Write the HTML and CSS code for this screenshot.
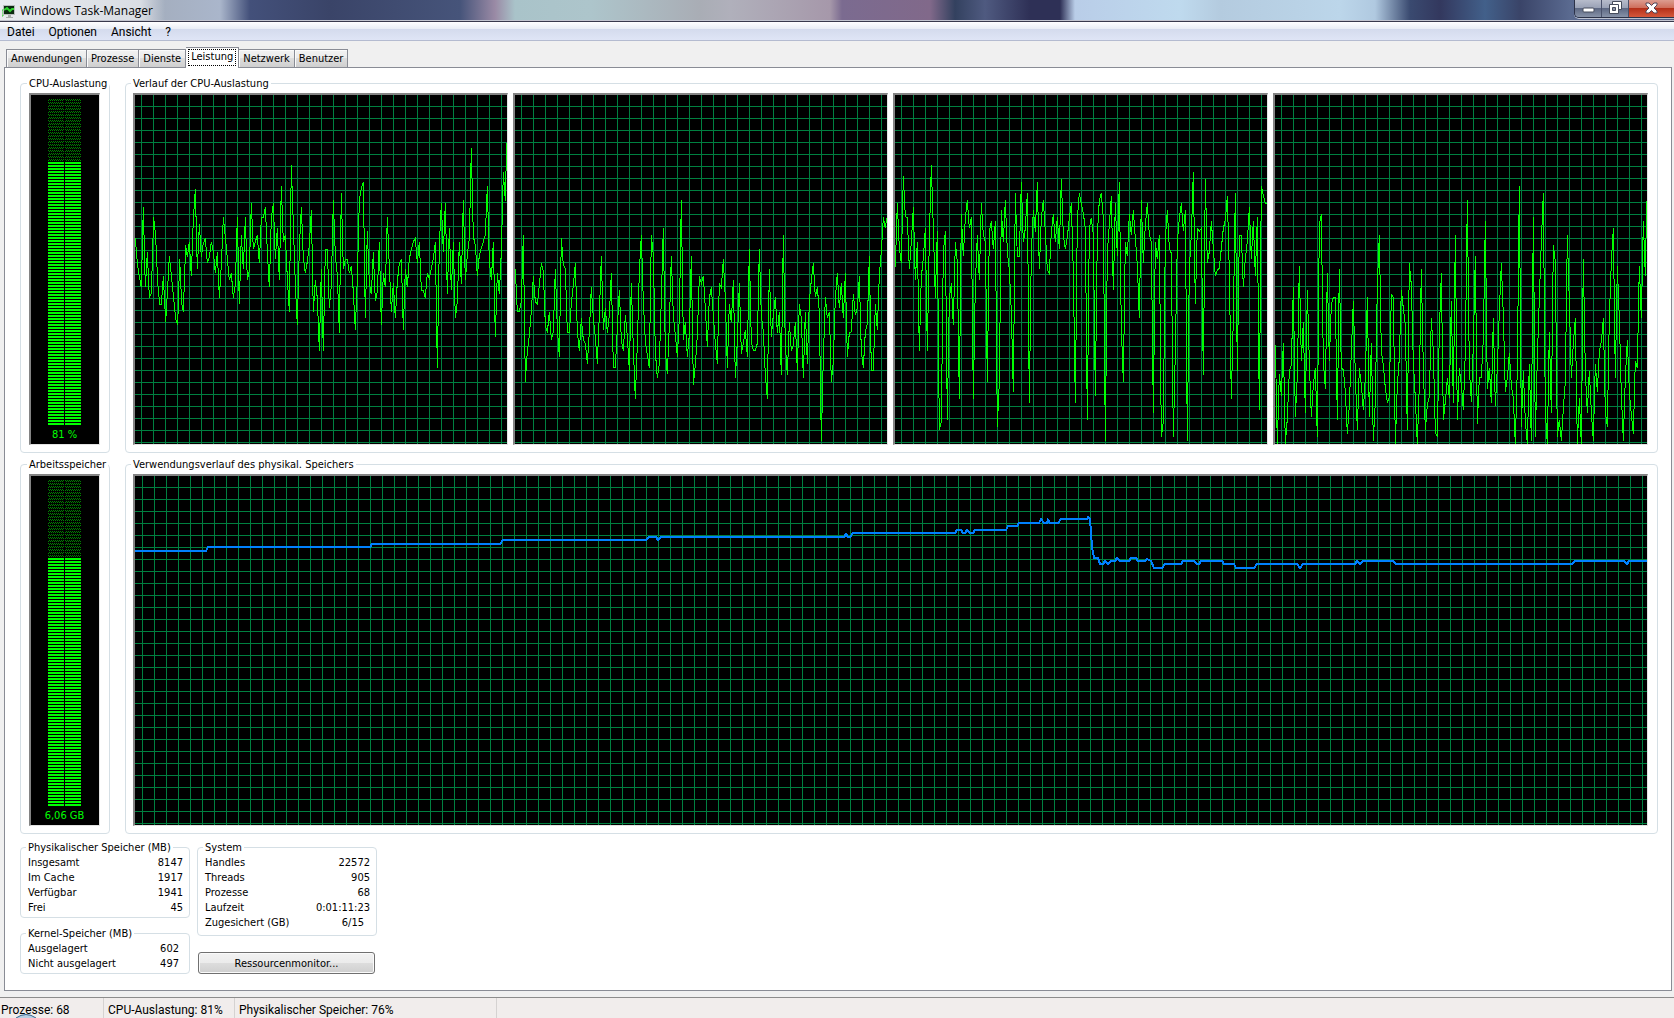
FILE: index.html
```html
<!DOCTYPE html>
<html lang="de">
<head>
  <meta charset="UTF-8">
  <meta name="viewport" content="width=device-width, initial-scale=1.0">
  <title>Windows Task-Manager</title>
  <link rel="stylesheet" href="styles.css">
</head>
<body>

  <header class="titlebar">
    <svg class="app-icon" width="13" height="16" viewBox="0 0 13 16">
      <path d="M0 7h1v6H0" fill="none" stroke="#3c3" />
      <path d="M1 2h12v10H1z" fill="#b9bdbd" />
      <path d="M2 3h10v8H2z" fill="#0b2a10" />
      <path d="M2 7l3-2 3 3 2-2h2" fill="none" stroke="#2fd02f" stroke-width="2" />
      <path d="M6 12h3v2h2v1H4v-1h2z" fill="#a9adad" />
    </svg>
    <h1>Windows Task-Manager</h1>
    <div class="window-buttons">
      <button class="win-btn" aria-label="Minimieren">
        <svg width="13" height="7" viewBox="0 0 13 7"><rect x="1" y="1" width="11" height="4" rx="1" fill="#fff" stroke="#464c5c" /></svg>
      </button>
      <button class="win-btn" aria-label="Verkleinern">
        <svg width="13" height="13" viewBox="0 0 13 13">
          <path d="M3.500.5h9v8h-9z" fill="#fff" stroke="#464c5c" />
          <path d="M.5 3.500h9v9h-9z" fill="#fff" stroke="#464c5c" />
          <path d="M3.500 6.500h3v3h-3z" fill="#8a93a6" stroke="#464c5c" />
        </svg>
      </button>
      <button class="win-btn close" aria-label="Schließen">
        <svg width="13" height="12" viewBox="0 0 13 12">
          <path d="M1 1h3l2.500 2.500L9 1h3v2L9 6l3 3v2H9L6.500 8.500 4 11H1V9l3-3-3-3z" fill="#fff" stroke="#50465a" />
        </svg>
      </button>
    </div>
  </header>

  <nav class="menu">
    <button>Datei</button>
    <button>Optionen</button>
    <button>Ansicht</button>
    <button>?</button>
  </nav>

  <div class="tabs" role="tablist">
    <button role="tab">Anwendungen</button>
    <button role="tab">Prozesse</button>
    <button role="tab">Dienste</button>
    <button role="tab" class="active" aria-selected="true"><span>Leistung</span></button>
    <button role="tab">Netzwerk</button>
    <button role="tab">Benutzer</button>
  </div>

  <main class="panel">
    <div class="row">
      <fieldset class="group meter-group">
        <legend>CPU-Auslastung</legend>
        <div class="meter">
          <div class="meter-bar"><div class="meter-fill" style="height: 81%"></div></div>
          <span>81 %</span>
        </div>
      </fieldset>

      <fieldset class="group history-group">
        <legend>Verlauf der CPU-Auslastung</legend>
        <div class="charts">
          <div class="chart">
            <svg viewBox="15 30 1116 1047" preserveAspectRatio="none">
              <polyline points="16,460 22,535 28,575 34,607 40,366 46,607 52,502 58,638 64,625 71,397 77,455 83,590 89,658 94,658 100,574 107,710 112,625 118,514 125,580 131,640 137,702 143,721 149,522 155,655 160,680 167,481 172,515 178,471 184,574 190,400 196,313 202,553 208,418 214,515 220,475 226,460 232,535 238,515 244,471 250,500 256,565 262,502 268,638 274,540 280,397 286,455 292,520 298,586 304,565 310,638 316,600 322,397 328,658 334,451 340,553 346,397 352,586 358,555 364,355 370,493 376,470 382,451 388,535 394,397 400,397 406,366 412,500 418,607 424,400 430,355 436,523 442,430 448,586 454,304 460,471 466,451 472,580 478,680 484,241 490,420 496,600 502,721 508,490 514,366 520,520 526,565 532,530 538,480 544,376 550,680 556,586 562,640 568,797 574,553 580,797 586,493 592,493 598,670 604,600 610,346 616,510 622,570 628,743 634,325 640,553 646,523 652,523 658,565 664,544 670,620 676,734 682,580 688,345 694,310 700,292 706,700 712,439 718,595 724,628 730,502 736,649 742,620 748,471 754,721 760,565 766,607 772,397 778,545 784,680 790,595 796,700 802,590 808,535 814,523 820,734 826,553 832,607 838,520 844,495 850,470 856,460 862,535 868,471 874,615 880,616 886,638 892,565 898,580 904,550 910,520 916,472 922,848 928,480 934,355 940,502 946,355 952,628 958,430 964,616 970,472 976,700 982,650 988,472 994,596 1000,346 1006,586 1012,510 1018,460 1024,190 1030,455 1036,480 1042,574 1048,510 1054,490 1060,470 1066,450 1072,304 1078,530 1084,586 1090,472 1096,755 1102,565 1108,628 1114,500 1120,262 1126,347 1130,173" />
            </svg>
          </div>
          <div class="chart">
            <svg viewBox="15 30 1116 1047" preserveAspectRatio="none">
              <polyline points="16,553 22,680 28,680 34,650 40,451 46,890 52,800 58,750 64,680 70,574 76,650 82,658 88,600 94,535 100,560 106,720 112,743 118,680 124,764 130,740 136,553 142,730 148,815 154,460 160,540 166,550 172,743 178,743 184,655 190,600 196,535 202,740 208,797 214,700 220,765 226,775 232,836 238,740 244,607 250,700 256,755 262,836 268,690 274,514 280,734 286,670 292,743 298,690 304,565 310,848 316,848 322,730 328,616 334,765 340,797 346,690 352,755 358,857 364,595 370,790 376,941 382,780 388,560 394,451 400,650 406,770 412,810 418,848 424,451 430,510 436,800 442,878 448,835 454,640 460,430 466,800 472,868 478,720 484,514 490,690 496,750 502,815 508,700 514,346 520,764 526,712 532,815 538,750 544,514 550,899 556,840 562,750 568,574 574,595 580,574 586,670 592,785 598,640 604,607 610,690 616,775 622,836 628,595 634,607 640,523 646,640 652,848 658,658 664,712 670,586 676,878 682,770 688,595 694,806 700,775 706,734 712,815 718,493 724,770 730,797 736,797 742,775 748,493 754,690 760,740 766,870 772,941 778,553 784,755 790,690 796,637 802,743 808,680 814,869 820,451 826,780 832,869 838,712 844,797 850,780 856,712 862,857 868,658 874,700 880,878 886,680 892,836 898,650 904,585 910,535 916,637 922,607 928,680 934,1067 940,820 946,637 952,700 958,680 964,890 970,830 976,640 982,565 988,670 994,595 1000,700 1006,565 1012,815 1018,743 1024,740 1030,628 1036,690 1042,670 1048,574 1054,800 1060,848 1066,740 1072,715 1078,514 1084,857 1090,857 1096,658 1102,734 1108,570 1114,500 1120,397 1126,430 1130,400" />
            </svg>
          </div>
          <div class="chart">
            <svg viewBox="15 30 1116 1047" preserveAspectRatio="none">
              <polyline points="16,545 22,355 28,490 34,535 40,274 46,395 52,398 58,553 64,470 70,366 76,586 82,472 88,797 94,575 100,520 106,430 112,797 118,460 124,241 130,430 136,638 142,439 148,1036 154,1010 160,500 166,439 172,1004 178,640 184,595 190,721 196,472 202,530 208,941 214,388 220,514 226,400 232,346 238,430 244,397 250,941 256,600 262,451 268,586 274,355 280,450 286,470 292,890 298,440 304,409 310,493 316,409 322,1025 328,890 334,376 340,472 346,346 352,500 358,555 364,680 370,920 376,325 382,514 388,514 394,292 400,472 406,430 412,325 418,953 424,500 430,376 436,440 442,292 448,553 454,400 460,346 466,440 472,555 478,565 484,440 490,388 496,472 502,397 508,493 514,283 520,450 526,493 532,455 538,400 544,355 550,560 556,953 562,400 568,325 574,355 580,385 586,430 592,1004 598,430 604,398 610,450 616,932 622,450 628,345 634,325 640,400 646,1067 652,500 658,420 664,334 670,616 676,355 682,514 688,292 694,730 700,890 706,472 712,514 718,388 724,450 730,376 736,460 742,540 748,700 754,346 760,535 766,420 772,355 778,450 784,470 790,983 796,472 802,523 808,451 814,1057 820,1010 826,460 832,376 838,490 844,505 850,1057 856,800 862,470 868,400 874,355 880,439 886,376 892,1067 898,550 904,450 910,262 916,658 922,430 928,439 934,430 940,869 946,283 952,535 958,500 964,409 970,490 976,574 982,555 988,550 994,490 1000,430 1006,405 1012,334 1018,560 1024,941 1030,700 1036,325 1042,857 1048,452 1054,452 1060,607 1066,520 1072,470 1078,367 1084,523 1090,409 1096,574 1102,397 1108,974 1114,304 1120,330 1126,355 1130,355" />
            </svg>
          </div>
          <div class="chart">
            <svg viewBox="15 30 1116 1047" preserveAspectRatio="none">
              <polyline points="16,780 22,1077 28,868 34,932 40,774 46,1077 52,1000 58,860 64,840 70,607 76,995 82,870 88,544 94,827 100,712 106,983 112,616 118,830 124,995 130,900 136,848 142,1057 148,420 154,388 160,830 166,911 172,565 178,827 184,660 190,637 196,637 202,1004 208,553 214,848 220,855 226,920 232,1046 238,960 244,800 250,649 256,870 262,1036 268,848 274,900 280,974 286,880 292,637 298,995 304,774 310,1067 316,950 322,600 328,451 334,800 340,840 346,910 352,953 358,935 364,628 370,637 376,1077 382,900 388,820 394,616 400,670 406,720 412,1036 418,535 424,600 430,830 436,940 442,1077 448,900 454,553 460,850 466,1036 472,960 478,935 484,700 490,800 496,1040 502,1057 508,740 514,565 520,1004 526,950 532,878 538,940 544,649 550,953 556,451 562,1004 568,848 574,900 580,974 586,800 592,346 598,850 604,950 610,780 616,514 622,1016 628,878 634,878 640,760 646,409 652,911 658,848 664,953 670,700 676,962 682,850 688,680 694,535 700,690 706,920 712,880 718,805 724,900 730,940 736,1077 742,850 748,304 754,1025 760,857 766,1010 772,1077 778,836 784,1067 790,397 796,1057 802,820 808,640 814,470 820,325 826,980 832,1077 838,742 844,983 850,481 856,530 862,1057 868,1004 874,1067 880,970 886,890 892,451 898,650 904,878 910,775 916,700 922,1077 928,940 934,1077 940,523 946,860 952,983 958,857 964,980 970,1067 976,836 982,920 988,800 994,770 1000,700 1006,980 1012,1025 1018,700 1024,530 1030,430 1036,878 1042,544 1048,700 1054,930 1060,1067 1066,880 1072,764 1078,920 1084,990 1090,1046 1096,827 1102,848 1108,544 1114,700 1120,409 1126,574 1130,348" />
            </svg>
          </div>
        </div>
      </fieldset>
    </div>

    <div class="row">
      <fieldset class="group meter-group">
        <legend>Arbeitsspeicher</legend>
        <div class="meter">
          <div class="meter-bar"><div class="meter-fill" style="height: 76%"></div></div>
          <span>6,06 GB</span>
        </div>
      </fieldset>

      <fieldset class="group history-group">
        <legend>Verwendungsverlauf des physikal. Speichers</legend>
        <div class="charts">
          <div class="chart memory">
            <svg viewBox="135 476 1512 349" preserveAspectRatio="none">
              <polyline points="135,551 206,551 208,547 370,547 372,544 500,544 503,540 646,540 649,537 656,537 658,540 661,537 844,537 846,534 848,537 850,537 853,533 955,533 957,530 961,530 963,533 965,533 967,530 970,533 973,533 975,530 1006,530 1008,526 1017,526 1019,523 1039,523 1041,519 1044,523 1047,523 1048,520 1050,523 1058,523 1061,519 1087,519 1088,517 1090,519 1091,532 1092,547 1094,558 1098,558 1100,564 1103,564 1105,561 1108,564 1111,561 1115,561 1117,558 1120,561 1129,561 1131,558 1136,558 1138,561 1145,561 1147,559 1151,561 1154,568 1162,568 1165,564 1181,564 1183,561 1194,561 1197,564 1199,564 1201,561 1222,561 1224,564 1234,564 1236,568 1254,568 1257,564 1297,564 1300,568 1303,564 1355,564 1357,561 1360,564 1363,561 1393,561 1396,564 1572,564 1575,561 1624,561 1627,564 1629,561 1648,561" />
            </svg>
          </div>
        </div>
      </fieldset>
    </div>

    <div class="details">
      <div class="details-col memory-col">
        <fieldset class="group">
          <legend>Physikalischer Speicher (MB)</legend>
          <table>
            <tr><th>Insgesamt</th><td>8147</td></tr>
            <tr><th>Im Cache</th><td>1917</td></tr>
            <tr><th>Verfügbar</th><td>1941</td></tr>
            <tr><th>Frei</th><td>45</td></tr>
          </table>
        </fieldset>
        <fieldset class="group kernel">
          <legend>Kernel-Speicher (MB)</legend>
          <table>
            <tr><th>Ausgelagert</th><td>602</td></tr>
            <tr><th>Nicht ausgelagert</th><td>497</td></tr>
          </table>
        </fieldset>
      </div>

      <div class="details-col system-col">
        <fieldset class="group system">
          <legend>System</legend>
          <table>
            <tr><th>Handles</th><td>22572</td></tr>
            <tr><th>Threads</th><td>905</td></tr>
            <tr><th>Prozesse</th><td>68</td></tr>
            <tr><th>Laufzeit</th><td>0:01:11:23</td></tr>
            <tr class="commit"><th>Zugesichert (GB)</th><td>6/15</td></tr>
          </table>
        </fieldset>
        <button class="btn">Ressourcenmonitor...</button>
      </div>
    </div>
  </main>

  <footer class="statusbar">
    <span class="status-processes">Prozesse: 68</span>
    <span class="status-cpu">CPU-Auslastung: 81%</span>
    <span class="status-memory">Physikalischer Speicher: 76%</span>
    <svg class="orb" width="22" height="4" viewBox="0 0 22 4"><path d="M1 4Q11-3 21 4" fill="#b8cfe4" stroke="#33658f" /></svg>
  </footer>

</body>
</html>
```
FILE: styles.css
```css
* {
  box-sizing: border-box;
}

body {
  margin: 0;
  height: 100vh;
  display: flex;
  flex-direction: column;
  overflow: hidden;
  background: #f0f0f0;
  color: #000;
  font-family: "DejaVu Sans Condensed", "Noto Sans", sans-serif;
  font-size: 11px;
  line-height: 14px;
}

button {
  font: inherit;
  color: inherit;
  margin: 0;
}

/* title bar */
.titlebar {
  height: 22px;
  flex: none;
  display: flex;
  align-items: center;
  border-bottom: 1px solid #3a3a4c;
  box-shadow: inset 0 -1px #c3c5cf;
  background:
    linear-gradient(90deg, rgba(255,255,255,0.8) 0, rgba(255,255,255,0.6) 140px, transparent 165px),
    linear-gradient(90deg, #8f9cae 0, #a3adbd 150px, #aab6cb 220px, #43507a 250px, #3a4468 330px, #46547a 460px, #9a8aa5 495px, #a9c3c9 515px, #adc5cb 590px, #a9adb5 700px, #b0b0bb 730px, #a698aa 830px, #7b6b90 842px, #81698a 930px, #33415f 955px, #4f5a80 985px, #2e3056 1030px, #2e3056 1060px, #b9cde8 1075px, #bfdaee 1180px, #b4cbdf 1220px, #bcd6ea 1340px, #b0c9e0 1375px, #3a4a70 1410px, #33385e 1440px, #42608a 1485px, #3a4468 1520px, #5a6a90 1570px, #4f5a80 100%);
}

.app-icon {
  flex: none;
  margin-left: 2px;
}

.titlebar h1 {
  margin: 0 auto 0 5px;
  font-family: "Open Sans", "Noto Sans", sans-serif;
  font-size: 12px;
  font-weight: normal;
}

.window-buttons {
  display: flex;
  align-self: flex-start;
  height: 18px;
  border: 1px solid #2c3248;
  border-top: none;
  border-right: none;
  border-radius: 0 0 0 5px;
  box-shadow: 0 1px rgba(255,255,255,0.6);
  overflow: hidden;
}

.win-btn {
  width: 27px;
  padding: 0 0 2px;
  display: flex;
  align-items: center;
  justify-content: center;
  border: none;
  border-right: 1px solid #4a526c;
  background: linear-gradient(#b7bccb 0, #9aa2b6 45%, #5e6984 50%, #8792a8 100%);
}

.win-btn:first-child {
  padding-bottom: 0;
  padding-top: 3px;
}

.win-btn.close {
  width: 45px;
  border-right: none;
  background: linear-gradient(#dc9c90 0, #cf6f5d 45%, #b5301a 50%, #d5573b 100%);
}

/* menu */
.menu {
  height: 19px;
  flex: none;
  display: flex;
  align-items: center;
  border-bottom: 1px solid #b4bbd0;
  background: linear-gradient(#fff 0, #e9edf5 7px, #d4dbed 7px, #dfe5f6 100%);
  font-family: Roboto, "Open Sans", sans-serif;
  font-size: 12px;
}

.menu button {
  border: none;
  background: none;
  padding: 1px 7px 0;
}

/* tabs */
.tabs {
  display: flex;
  align-items: flex-end;
  flex: none;
  height: 26px;
  padding-left: 6px;
}

.tabs button {
  height: 18px;
  padding: 1px 4px 0;
  border: 1px solid #898c95;
  border-bottom: none;
  border-left-width: 0;
  background: linear-gradient(#f2f2f2 0, #ebebeb 50%, #dddddd 50%, #cfcfcf 100%);
  box-shadow: inset 1px 1px #fbfbfb;
}

.tabs button:first-child {
  border-left-width: 1px;
}

.tabs .active {
  height: 21px;
  margin: 0 0 -1px;
  padding: 1px 2px 0;
  display: flex;
  background: #fff;
  position: relative;
}

.tabs .active span {
  height: 17px;
  padding: 0 2px;
  border: 1px dotted #000;
}

/* performance page */
.panel {
  flex: 1;
  min-height: 0;
  display: flex;
  flex-direction: column;
  margin: 0 2px 6px 4px;
  padding: 8px 13px 16px 15px;
  border: 1px solid #898c95;
  background: #fff;
}

.row {
  flex: 1;
  min-height: 0;
  display: flex;
  gap: 15px;
  margin-bottom: 4px;
}

.group {
  margin: 0;
  padding: 0 7px 7px 8px;
  border: 1px solid #d5dfe5;
  border-radius: 4px;
  min-width: 0;
}

.group legend {
  height: 14px;
  margin-left: -2px;
  padding: 0 2px;
  line-height: 16px;
  white-space: nowrap;
}

.meter-group {
  width: 90px;
  flex: none;
}

.history-group {
  flex: 1;
  padding-right: 9px;
  padding-left: 7px;
}

.meter,
.charts {
  margin-top: 3px;
  height: calc(100% - 3px);
}

.meter,
.chart {
  border: 2px solid;
  border-width: 2px 1px 1px 2px;
  border-color: #848484 #e3e3e3 #e3e3e3 #848484;
  background-color: #000;
}

.meter {
  width: 71px;
  display: flex;
  flex-direction: column;
  align-items: center;
  padding-top: 4px;
  padding-right: 1px;
  color: #0f0;
}

/* unlit segments: dithered dots, three pixels per segment */
.meter-bar {
  width: 33px;
  flex: 1;
  display: flex;
  align-items: flex-end;
  background:
    linear-gradient(90deg, transparent 16px, #000 16px, #000 17px, transparent 17px),
    repeating-linear-gradient(0deg, transparent 0 2px, #000 2px 3px),
    conic-gradient(#008000 25%, #000 0 50%, #008000 0 75%, #000 0) 0 0 / 2px 2px;
}

.meter-fill {
  width: 100%;
  background:
    linear-gradient(90deg, transparent 16px, #000 16px, #000 17px, transparent 17px),
    repeating-linear-gradient(0deg, #0f0 0 2px, #000 2px 3px);
}

.meter span {
  margin: 3px 0 2px;
}

.charts {
  display: flex;
  gap: 5px;
}

.chart {
  flex: 1;
  min-width: 0;
  background-image:
    linear-gradient(90deg, #008040 1px, transparent 1px),
    linear-gradient(#008040 1px, transparent 1px);
  background-size: 12px 12px;
  background-position: 6px 11px;
}

.chart.memory {
  background-position: 7px 11px;
}

.chart svg {
  display: block;
  width: 100%;
  height: 100%;
}

.chart polyline {
  fill: none;
  stroke: #0f0;
  stroke-width: 1px;
  vector-effect: non-scaling-stroke;
  shape-rendering: crispEdges;
}

.chart.memory polyline {
  stroke: #0080ff;
  stroke-width: 2px;
}

/* number tables */
.details {
  flex: none;
  display: flex;
  gap: 7px;
  margin-top: 2px;
}

.details-col {
  display: flex;
  flex-direction: column;
}

.memory-col {
  width: 170px;
  gap: 8px;
}

.system-col {
  width: 180px;
  gap: 16px;
}

.details .group {
  padding: 1px 6px 2px 7px;
}

.details .kernel {
  padding-right: 10px;
}

.details .system {
  padding-bottom: 5px;
}

table {
  width: 100%;
  border-collapse: collapse;
}

th,
td {
  padding: 0;
  height: 15px;
  line-height: 15px;
  font-weight: normal;
  text-align: left;
}

td {
  text-align: right;
}

.commit td {
  padding-right: 6px;
}

.btn {
  height: 22px;
  margin: 0 2px 0 1px;
  padding: 1px 0 0;
  border: 1px solid #707070;
  border-radius: 3px;
  background: linear-gradient(#f2f2f2 0, #ebebeb 50%, #dddddd 50%, #cfcfcf 100%);
  box-shadow: inset 0 0 0 1px #fafafa;
}

/* status bar */
.statusbar {
  flex: none;
  height: 21px;
  display: flex;
  position: relative;
  border-top: 1px solid #8c8c8c;
  background: #f1edec;
  font-family: Roboto, "Open Sans", sans-serif;
  font-size: 12px;
  line-height: 24px;
}

.statusbar span {
  border-right: 1px solid #d5d2d1;
  white-space: nowrap;
}

.status-processes {
  width: 104px;
  padding-left: 1px;
}

.status-cpu {
  width: 131px;
  padding-left: 4px;
}

.status-memory {
  width: 262px;
  padding-left: 4px;
}

.orb {
  position: absolute;
  left: 15px;
  bottom: 0;
}
```
